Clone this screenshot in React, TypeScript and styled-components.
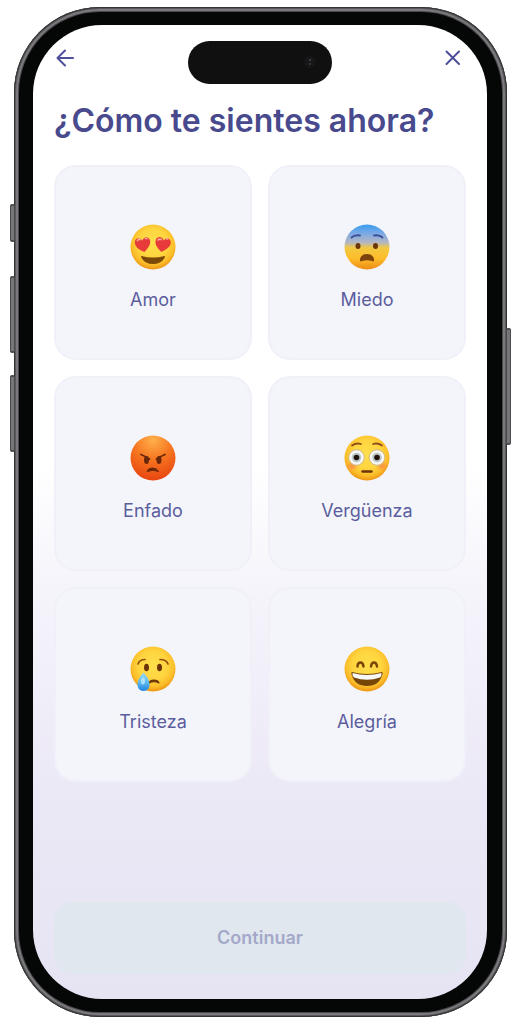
import React, { useState } from "react";
import styled, { createGlobalStyle } from "styled-components";

const GlobalStyle = createGlobalStyle`
  *, *::before, *::after { box-sizing: border-box; }
  body { margin: 0; background: #ffffff; font-family: Inter, "Liberation Sans", sans-serif; }
`;

const Stage = styled.div`
  padding: 7px 13px 7px 14px;
`;

const Phone = styled.div`
  position: relative;
  padding: 5px;
  border-radius: 86px;
  background: #48474a;
  box-shadow: inset 0 0 0 1px #343435, inset 0 0 0 2px #59585b, inset 0 0 0 4px #7b797d;
`;

const SideKey = styled.span<{ $side: "left" | "right"; $top: number; $length: number }>`
  position: absolute;
  ${(p) => p.$side}: -4px;
  top: ${(p) => p.$top}px;
  width: 5px;
  height: ${(p) => p.$length}px;
  border: 1px solid #4a494b;
  border-width: 2px 1px;
  border-radius: 2px;
  background: #777577;
`;

const Bezel = styled.div`
  padding: 13px 15px 13px 14px;
  border-radius: 81px;
  background: #050606;
`;

const Screen = styled.main`
  position: relative;
  display: flex;
  flex-direction: column;
  padding: 20px 21px 25px;
  border-radius: 69px;
  background: linear-gradient(#ffffff 0%, #ffffff 45%, #f5f4fb 58%, #ece9f6 78%, #e6e3f3 100%);
`;

const Island = styled.div`
  position: absolute;
  top: 16px;
  left: 50%;
  width: 144px;
  height: 43px;
  margin-left: -72px;
  border-radius: 22px;
  background: #101011;
`;

const Lens = styled.svg`
  position: absolute;
  top: 13px;
  right: 14px;
  width: 16px;
  height: 16px;
`;

const TopBar = styled.header`
  display: flex;
  justify-content: space-between;
  align-items: center;
`;

const IconButton = styled.button`
  display: flex;
  padding: 0;
  border: 0;
  background: none;
  color: #4d4f9a;
  cursor: pointer;
`;

const Title = styled.h1`
  margin: 30px 0 24px;
  color: #484a8d;
  font-size: 32px;
  font-weight: 600;
  line-height: 40px;
  white-space: nowrap;
`;

const Grid = styled.div`
  display: grid;
  grid-template-columns: 1fr 1fr;
  gap: 16px;
`;

const Card = styled.button`
  display: flex;
  flex-direction: column;
  align-items: center;
  gap: 18px;
  padding: 57px 8px 46px;
  border: 2px solid #f0f0f9;
  border-radius: 22px;
  background: #f4f5fb;
  color: #5b5d9d;
  font-family: inherit;
  font-size: 18px;
  font-weight: 400;
  line-height: 24px;
  cursor: pointer;
`;

const Face = styled.svg`
  width: 46px;
  height: 46px;
`;

const Continue = styled.button`
  margin-top: 120px;
  padding: 24px;
  border: 0;
  border-radius: 18px;
  background: #e0e7ef;
  color: #a4a8c9;
  font-family: inherit;
  font-size: 18px;
  font-weight: 600;
  line-height: 24px;
`;

const Defs = styled.svg`
  position: absolute;
  width: 0;
  height: 0;
`;

const brown = "#6b3509";

function Love() {
  const heart = "M0 8C-4 5.500-8.500 2-7.800-3C-7-7.500-1.500-7.500 0-3.500C2-7.500 7-7 7.500-2.500C8 2 3.500 5.500 0 8Z";
  return (
    <>
      <circle cx="23" cy="23" r="22.500" fill="url(#yellow)" />
      <path d={heart} transform="translate(13 20) rotate(-10)" fill="#e83a3a" />
      <path d={heart} transform="translate(33 20) rotate(10)" fill="#e83a3a" />
      <path d="M7.500 16.500Q9 14.500 10.500 15.500M15.500 14.500L17 14.500M28 16Q29.500 14.500 31 15.500M36 14.500L37.500 15" fill="none" stroke="#f5aa98" strokeWidth="1.700" strokeLinecap="round" />
      <path d="M11.500 32Q23 35 34.500 32Q35.500 32 34.500 34Q31 40 23 40Q15 40 11.500 34Q10.500 32 11.500 32Z" fill="#7c4a08" />
    </>
  );
}

function Fear() {
  return (
    <>
      <circle cx="23" cy="23" r="22.500" fill="url(#fear)" />
      <path d="M7.500 13.500Q10.500 10.500 16 11.500M38.500 13.500Q35.500 10.500 30 11.500" fill="none" stroke="#3d4f9b" strokeWidth="1.800" strokeLinecap="round" />
      <ellipse cx="14" cy="22" rx="2.500" ry="3" fill={brown} />
      <ellipse cx="31.500" cy="22" rx="2.500" ry="3" fill={brown} />
      <path d="M16 36.500Q16 30 23 30Q30 30 30 36.500Q30 38 28 37Q23 35.500 18 37Q16 38 16 36.500Z" fill="#7c430c" />
    </>
  );
}

function Anger() {
  return (
    <>
      <circle cx="23" cy="23" r="22.500" fill="url(#red)" />
      <path d="M11 19.500Q14.500 21 19.500 24M35 19.500Q31.500 21 26.500 24" fill="none" stroke="#69270a" strokeWidth="1.800" strokeLinecap="round" />
      <ellipse cx="16.500" cy="25" rx="2.500" ry="4" fill="#69270a" />
      <ellipse cx="29" cy="25" rx="2.500" ry="4" fill="#69270a" />
      <path d="M17 36.500Q18 33 22.500 33Q27 33 28.500 36.500Q23 34 17 36.500Z" fill="#69270a" stroke="#69270a" strokeWidth="1" strokeLinejoin="round" />
    </>
  );
}

function Shame() {
  return (
    <>
      <circle cx="23" cy="23" r="22.500" fill="url(#yellow)" />
      <ellipse cx="8" cy="31" rx="6.500" ry="5.500" fill="url(#blush)" />
      <ellipse cx="38" cy="31" rx="6.500" ry="5.500" fill="url(#blush)" />
      <circle cx="12.500" cy="22.500" r="7.800" fill="#f7f7f7" stroke="#d1b77c" strokeWidth="1" />
      <circle cx="33" cy="22.500" r="7.800" fill="#f7f7f7" stroke="#d1b77c" strokeWidth="1" />
      <circle cx="12.500" cy="22.500" r="4.800" fill="#bcc6c9" />
      <circle cx="33" cy="22.500" r="4.800" fill="#bcc6c9" />
      <circle cx="12.500" cy="22.500" r="2.800" fill="#20130a" />
      <circle cx="33" cy="22.500" r="2.800" fill="#20130a" />
      <path d="M8 10.500Q12 7.500 17 9M38 10.500Q34 7.500 29 9" fill="none" stroke="#91501a" strokeWidth="1.800" strokeLinecap="round" />
      <path d="M18.500 36.500H27.500" stroke={brown} strokeWidth="2.400" strokeLinecap="round" />
    </>
  );
}

function Sadness() {
  return (
    <>
      <circle cx="23" cy="23" r="22.500" fill="url(#yellow)" />
      <path d="M8 18Q9.500 13.500 15 13.500M38 18Q36.500 13.500 30 13.500" fill="none" stroke="#925009" strokeWidth="1.700" strokeLinecap="round" />
      <ellipse cx="16.500" cy="21.500" rx="2.500" ry="3.800" fill={brown} />
      <ellipse cx="29.500" cy="21.500" rx="2.500" ry="3.800" fill={brown} />
      <path d="M19 37Q20 34 24 34Q28 34 29 37Q24 34.500 19 37Z" fill={brown} stroke={brown} strokeWidth="1.200" strokeLinejoin="round" />
      <path d="M13.500 26.500Q19.500 33 19.500 38.500Q19.500 45 13.500 45Q7.500 45 7.500 38.500Q7.500 33 13.500 26.500Z" fill="url(#tear)" />
      <ellipse cx="13" cy="35" rx="2" ry="3.500" fill="#bfe9fb" opacity=".8" />
    </>
  );
}

function Joy() {
  return (
    <>
      <circle cx="23" cy="23" r="22.500" fill="url(#yellow)" />
      <path d="M13.500 20.500Q13.500 16.500 16.500 16.500Q19 16.500 19.500 20.500M27 20.500Q27.500 16.500 30 16.500Q32.500 16.500 33 20.500" fill="none" stroke="#7b4408" strokeWidth="2.400" strokeLinecap="round" />
      <path d="M8 26Q23 30 38 26Q39 26 38.500 28.500Q35 40 23 40Q11 40 7.500 28.500Q7 26 8 26Z" fill="#764609" />
      <path d="M8.500 27Q23 31 37.500 27Q38 30 36 31.500Q23 36 10 31.500Q8 30 8.500 27Z" fill="#f8f8f6" />
    </>
  );
}

const moods = [
  { name: "Amor", Drawing: Love },
  { name: "Miedo", Drawing: Fear },
  { name: "Enfado", Drawing: Anger },
  { name: "Vergüenza", Drawing: Shame },
  { name: "Tristeza", Drawing: Sadness },
  { name: "Alegría", Drawing: Joy },
];

function Gradients() {
  return (
    <Defs aria-hidden="true">
      <defs>
        <radialGradient id="yellow" cx=".5" cy=".42" r=".58">
          <stop offset="0" stopColor="#ffdf4c" />
          <stop offset=".55" stopColor="#ffd53f" />
          <stop offset=".82" stopColor="#fbbd2a" />
          <stop offset="1" stopColor="#ec9413" />
        </radialGradient>
        <radialGradient id="red" cx=".5" cy=".1" r=".9">
          <stop offset="0" stopColor="#ffb04a" />
          <stop offset=".5" stopColor="#f6741f" />
          <stop offset="1" stopColor="#e74510" />
        </radialGradient>
        <linearGradient id="fear" x1="0" y1="0" x2="0" y2="1">
          <stop offset="0" stopColor="#389df0" />
          <stop offset=".2" stopColor="#7da9e4" />
          <stop offset=".4" stopColor="#b4b6c2" />
          <stop offset=".52" stopColor="#f2c842" />
          <stop offset=".75" stopColor="#fdbd29" />
          <stop offset="1" stopColor="#ed8b17" />
        </linearGradient>
        <radialGradient id="blush">
          <stop offset="0" stopColor="#fa8a48" stopOpacity=".9" />
          <stop offset="1" stopColor="#fa8a48" stopOpacity="0" />
        </radialGradient>
        <linearGradient id="tear" x1="0" y1="0" x2="0" y2="1">
          <stop offset="0" stopColor="#9ed9ee" />
          <stop offset=".5" stopColor="#61bdf0" />
          <stop offset="1" stopColor="#1f83e2" />
        </linearGradient>
      </defs>
    </Defs>
  );
}

export default function App() {
  const [mood, setMood] = useState<string | null>(null);
  return (
    <>
      <GlobalStyle />
      <Gradients />
      <Stage>
        <Phone>
          <SideKey $side="left" $top={197} $length={38} />
          <SideKey $side="left" $top={269} $length={77} />
          <SideKey $side="left" $top={368} $length={77} />
          <SideKey $side="right" $top={321} $length={117} />
          <Bezel>
            <Screen>
              <Island>
                <Lens viewBox="0 0 16 16" aria-hidden="true">
                  <circle cx="8" cy="8" r="6" fill="#171719" />
                  <circle cx="8" cy="6" r="1" fill="#4b4b50" />
                  <circle cx="8" cy="10" r="1" fill="#3c3c41" />
                </Lens>
              </Island>
              <TopBar>
                <IconButton aria-label="Volver">
                  <svg width="24" height="26" viewBox="0 0 24 26" fill="none" stroke="currentColor" strokeWidth="2" strokeLinecap="round" strokeLinejoin="round">
                    <path d="M19 13H3.500M11 5.500L3.500 13L11 20.500" />
                  </svg>
                </IconButton>
                <IconButton aria-label="Cerrar">
                  <svg width="26" height="26" viewBox="0 0 26 26" fill="none" stroke="currentColor" strokeWidth="2" strokeLinecap="round">
                    <path d="M6.500 6.500L19 19M19 6.500L6.500 19" />
                  </svg>
                </IconButton>
              </TopBar>
              <Title>¿Cómo te sientes ahora?</Title>
              <Grid>
                {moods.map(({ name, Drawing }) => (
                  <Card key={name} type="button" aria-pressed={mood === name} onClick={() => setMood(name)}>
                    <Face viewBox="0 0 46 46" aria-hidden="true">
                      <Drawing />
                    </Face>
                    {name}
                  </Card>
                ))}
              </Grid>
              <Continue type="button" disabled={mood === null}>Continuar</Continue>
            </Screen>
          </Bezel>
        </Phone>
      </Stage>
    </>
  );
}
